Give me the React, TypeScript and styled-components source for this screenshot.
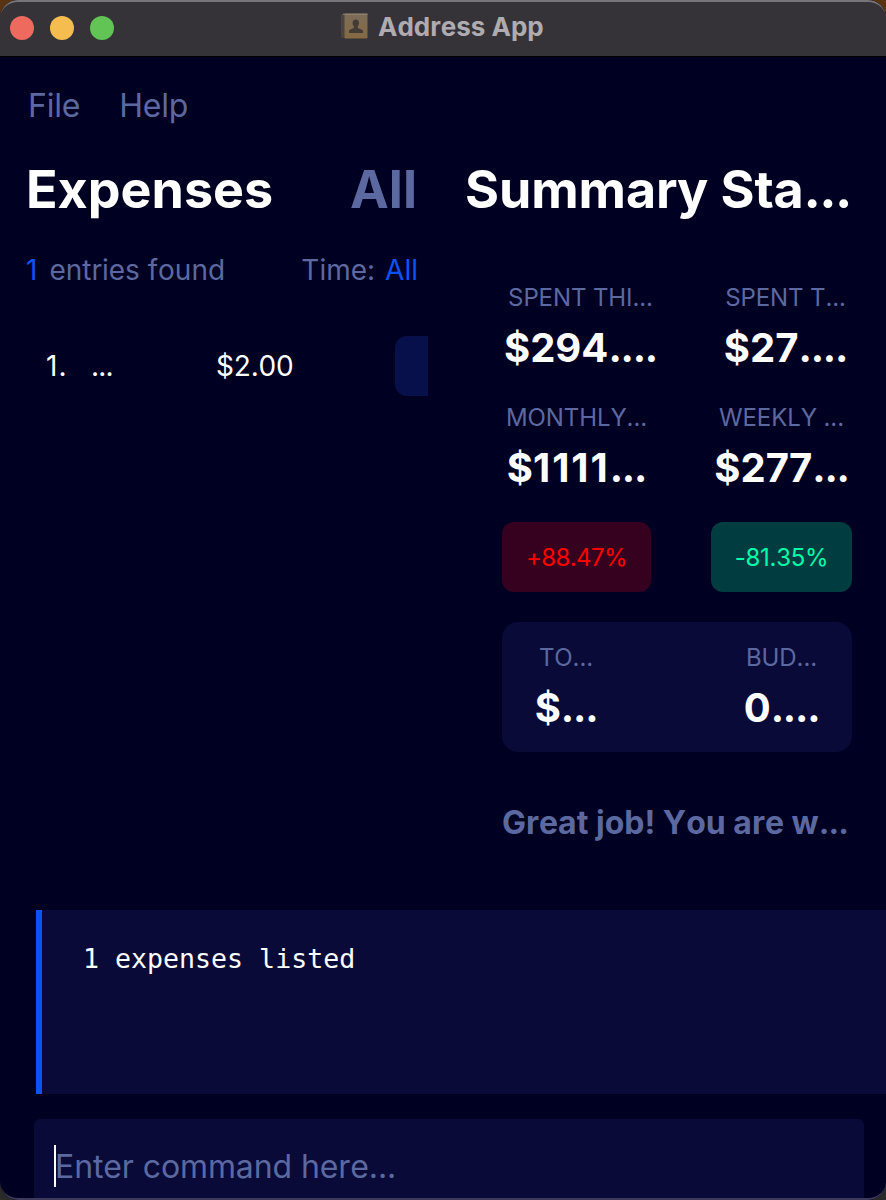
import React from "react";
import styled, { createGlobalStyle } from "styled-components";

const Global = createGlobalStyle`
  * { box-sizing: border-box; }
  html, body { margin: 0; padding: 0; background: linear-gradient(#5a3410, #2a2a28); }
  body { overflow: hidden; }
`;

const Window = styled.div`
  position: relative;
  display: flex;
  flex-direction: column;
  width: 886px;
  height: 1200px;
  overflow: hidden;
  border-radius: 18px;
  background: #000023;
  color: #fff;
  font-family: Inter, "Liberation Sans", sans-serif;
  font-optical-sizing: none;
  font-kerning: none;
  font-feature-settings: "calt" 0;
  white-space: pre;
`;

const WindowEdge = styled.div`
  position: absolute;
  inset: 0;
  border-radius: 18px;
  border-top: 2px solid #777579;
  border-bottom: 2px solid #3c3a5c;
  pointer-events: none;
`;

const TitleBar = styled.header`
  display: flex;
  align-items: center;
  height: 57px;
  flex: none;
  padding: 2px 10px;
  background: #353238;
  border-bottom: 1px solid #000;
`;

const Lights = styled.div`
  display: flex;
  gap: 16px;
  width: 331px;
`;

const Light = styled.span<{ $color: string }>`
  width: 24px;
  height: 24px;
  border-radius: 50%;
  background: ${(p) => p.$color};
`;

const AppTitle = styled.div`
  display: flex;
  align-items: center;
  gap: 10px;
  height: 50px;
  padding-bottom: 1px;

  svg {
    margin-bottom: 3px;
  }
`;

const Text = styled.span<{ $size: number; $color?: string; $weight?: number; $track?: number }>`
  font-size: ${(p) => p.$size}px;
  line-height: ${(p) => p.$size * 1.25}px;
  font-weight: ${(p) => p.$weight ?? 400};
  letter-spacing: ${(p) => p.$track ?? 0}px;
  color: ${(p) => p.$color ?? "#fff"};
`;

const Dots = styled.span`
  letter-spacing: -0.03em;
`;

const MenuBar = styled.nav`
  display: flex;
  align-items: center;
  gap: 39px;
  flex: none;
  height: 97px;
  padding: 1px 28px 0;
`;

const Main = styled.main`
  display: flex;
  flex: none;
  height: 756px;
`;

const ExpensePanel = styled.section`
  width: 428px;
  overflow: hidden;
`;

const PanelHeader = styled.div`
  display: flex;
  align-items: center;
  justify-content: space-between;
  height: 70px;
  padding: 0 11px 0 26px;
`;

const FilterRow = styled(PanelHeader)`
  height: 92px;
  padding-right: 10px;
`;

const Pair = styled.div<{ $gap: number }>`
  display: flex;
  gap: ${(p) => p.$gap}px;
`;

const ExpenseRow = styled.div`
  display: flex;
  align-items: center;
  height: 60px;
  margin-top: 20px;
  padding-left: 46px;
`;

const Cell = styled.div<{ $width: number }>`
  display: flex;
  flex: none;
  width: ${(p) => p.$width}px;
`;

const CategoryTag = styled.div`
  flex: none;
  width: 80px;
  height: 60px;
  border-radius: 12px;
  background: #08104c;
`;

const SummaryPanel = styled.section`
  width: 458px;
  padding-left: 37px;
`;

const SummaryTitle = styled.div`
  display: flex;
  align-items: center;
  height: 70px;
`;

const SummaryBody = styled.div`
  display: flex;
  flex-direction: column;
  width: 387px;
  padding: 58px 0 0 37px;
`;

const Row = styled.div`
  display: flex;
  justify-content: space-between;
`;

const Stat = styled.div<{ $width: number }>`
  display: flex;
  flex-direction: column;
  align-items: center;
  width: ${(p) => p.$width}px;
  height: 120px;
`;

const StatLabel = styled.div`
  display: flex;
  align-items: center;
  height: 30px;
  padding-top: 2px;
`;

const StatValue = styled.div`
  display: flex;
  align-items: center;
  height: 71px;
`;

const Badge = styled.div<{ $width: number; $bg: string }>`
  display: flex;
  align-items: center;
  justify-content: center;
  width: ${(p) => p.$width}px;
  height: 70px;
  padding-top: 2px;
  border-radius: 12px;
  background: ${(p) => p.$bg};
`;

const Card = styled.div`
  display: flex;
  justify-content: space-between;
  height: 130px;
  margin-top: 30px;
  padding: 20px 34px 0;
  border-radius: 16px;
  background: #090a37;
`;

const Message = styled.div`
  display: flex;
  align-items: center;
  height: 40px;
  margin-top: 51px;
`;

const ResultBox = styled.section`
  flex: none;
  height: 184px;
  margin-left: 36px;
  padding: 32px 41px;
  border-left: 6px solid #0d52f5;
  background: #090a37;
`;

const ResultText = styled.div`
  font-family: "DejaVu Sans Mono", monospace;
  font-size: 26.6px;
  line-height: 34px;
`;

const CommandBox = styled.div`
  display: flex;
  align-items: flex-start;
  flex: none;
  width: 830px;
  height: 90px;
  margin: 25px 0 0 34px;
  padding: 26px 20px;
  border-radius: 6px;
  background: #090a37;
`;

const Caret = styled.span`
  width: 2px;
  height: 42px;
  margin-right: -1px;
  background: #fff;
`;

const Placeholder = styled.div`
  display: flex;
  align-items: center;
  height: 44px;
`;

const muted = "#5c69a0";
const blue = "#0d52f5";

function BookIcon() {
  return (
    <svg width="27" height="26" viewBox="0 0 27 26">
      <defs>
        <linearGradient id="cover" x1="0" y1="0" x2="0" y2="1">
          <stop offset="0" stopColor="#7c6c58" />
          <stop offset="1" stopColor="#846a43" />
        </linearGradient>
      </defs>
      <rect x="0" y="1" width="5" height="24" rx="1" fill="#494441" />
      <rect x="3.5" y="0.5" width="23" height="25" rx="0.8" fill="url(#cover)" />
      <path d="M2 1.2H26.5" stroke="#938778" strokeWidth="1" />
      <path
        d="M8 20v-2c0-1.700 3.500-2 4.800-3.300v-1.700c-2-2-1.700-6.500 2-6.500s4 4.500 2 6.500v1.700c1.300 1.300 5.200 1.600 5.200 3.300v2z"
        fill="#423b36"
      />
    </svg>
  );
}

interface StatProps {
  width: number;
  label: string;
  unit?: string;
  value?: string;
  dots?: string;
  track?: number;
}

function StatBlock({ width, label, unit = "$", value = "", dots = "...", track = 0 }: StatProps) {
  return (
    <Stat $width={width}>
      <StatLabel>
        <Text $size={24} $track={-0.1} $color={muted}>{label}</Text>
      </StatLabel>
      <StatValue>
        <Text $size={40} $weight={700}>
          {unit}<Text $size={40} $weight={700} $track={track}>{value}</Text><Dots>{dots}</Dots>
        </Text>
      </StatValue>
    </Stat>
  );
}

export default function App() {
  return (
    <Window>
      <Global />
      <TitleBar>
        <Lights>
          <Light $color="#ee6a5f" />
          <Light $color="#f5bd4f" />
          <Light $color="#61c454" />
        </Lights>
        <AppTitle>
          <BookIcon />
          <Text $size={26} $weight={700} $color="#aeacb0">Address App</Text>
        </AppTitle>
      </TitleBar>
      <MenuBar>
        <Text $size={32} $track={-0.2} $color={muted}>File</Text>
        <Text $size={32} $track={-0.2} $color={muted}>Help</Text>
      </MenuBar>
      <Main>
        <ExpensePanel>
          <PanelHeader>
            <Text $size={52} $weight={700}>Expenses</Text>
            <Text $size={52} $weight={700} $color={muted}>All</Text>
          </PanelHeader>
          <FilterRow>
            <Pair $gap={12}>
              <Text $size={28} $color={blue}>1</Text>
              <Text $size={28} $color={muted}>entries found</Text>
            </Pair>
            <Pair $gap={10}>
              <Text $size={28} $color={muted}>Time:</Text>
              <Text $size={28} $color={blue}>All</Text>
            </Pair>
          </FilterRow>
          <ExpenseRow>
            <Cell $width={45}><Text $size={28} $track={1}>1.</Text></Cell>
            <Cell $width={125}><Text $size={28}><Dots>...</Dots></Text></Cell>
            <Cell $width={179}><Text $size={28} $track={-0.2}>$2.00</Text></Cell>
            <CategoryTag />
          </ExpenseRow>
        </ExpensePanel>
        <SummaryPanel>
          <SummaryTitle>
            <Text $size={52} $weight={700} $track={-0.1}>Summary Sta<Dots>...</Dots></Text>
          </SummaryTitle>
          <SummaryBody>
            <Row>
              <StatBlock width={157} label="SPENT THI..." value="294" dots="...." />
              <StatBlock width={133} label="SPENT T..." value="27" dots="...." />
            </Row>
            <Row>
              <StatBlock width={149} label="MONTHLY..." value="1111" track={1.9} />
              <StatBlock width={141} label="WEEKLY ..." value="277" />
            </Row>
            <Row>
              <Badge $width={149} $bg="#36001f"><Text $size={24} $track={-0.6} $color="#ff0000">+88.47%</Text></Badge>
              <Badge $width={141} $bg="#003c40"><Text $size={24} $track={-0.3} $color="#00ffaa">-81.35%</Text></Badge>
            </Row>
            <Card>
              <StatBlock width={60} label="TO..." />
              <StatBlock width={73} label="BUD..." unit="0" dots="...." />
            </Card>
            <Message>
              <Text $size={32} $weight={700} $color={muted}>Great job! You are w<Dots>...</Dots></Text>
            </Message>
          </SummaryBody>
        </SummaryPanel>
      </Main>
      <ResultBox>
        <ResultText>1 expenses listed</ResultText>
      </ResultBox>
      <CommandBox>
        <Caret />
        <Placeholder>
          <Text $size={32} $track={-0.1} $color={muted}>Enter command here...</Text>
        </Placeholder>
      </CommandBox>
      <WindowEdge />
    </Window>
  );
}
